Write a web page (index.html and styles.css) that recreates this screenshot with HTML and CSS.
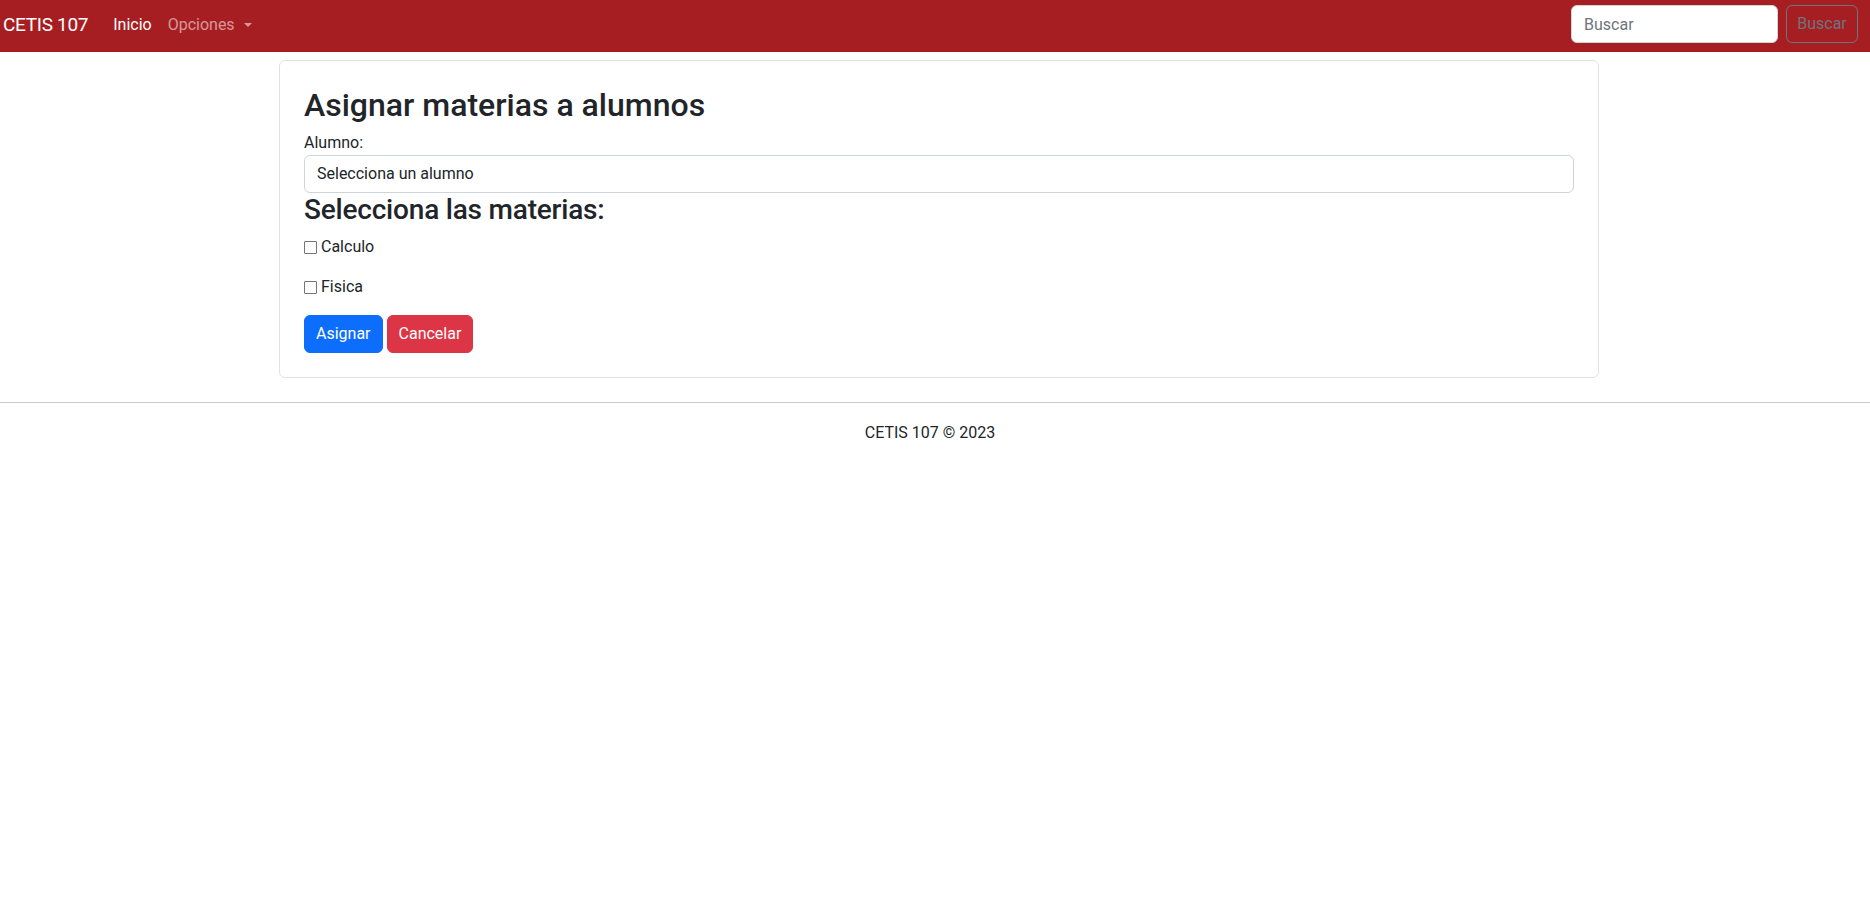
FILE: index.html
```html
<!DOCTYPE html>
<html lang="es">
<head>
<meta charset="utf-8">
<title>Asignar materias</title>
<link rel="stylesheet" href="styles.css">
</head>
<body>
<nav class="navbar">
  <div class="nav-left">
    <a class="brand" href="#">CETIS 107</a>
    <a class="nav-link active" href="#">Inicio</a>
    <a class="nav-link dropdown" href="#">Opciones <span class="caret"></span></a>
  </div>
  <form class="search">
    <input class="search-input" type="text" placeholder="Buscar">
    <button class="search-btn" type="button">Buscar</button>
  </form>
</nav>
<main class="main">
  <section class="card">
    <h2 class="title">Asignar materias a alumnos</h2>
    <label class="label">Alumno:</label>
    <div class="select">Selecciona un alumno</div>
    <h3 class="subtitle">Selecciona las materias:</h3>
    <p class="check"><span class="box"></span>Calculo</p>
    <p class="check"><span class="box"></span>Fisica</p>
    <div class="actions">
      <button class="btn btn-primary" type="button">Asignar</button>
      <button class="btn btn-danger" type="button">Cancelar</button>
    </div>
  </section>
</main>
<footer class="footer">
  <hr class="rule">
  <p class="copy">CETIS 107 © 2023</p>
</footer>
</body>
</html>
```

FILE: styles.css
```css
* { box-sizing: border-box; }
html, body { margin: 0; padding: 0; }
body {
  font-family: Roboto, "Liberation Sans", sans-serif;
  font-size: 16px;
  line-height: 1.5;
  color: #212529;
  background: #fff;
}
.navbar {
  height: 52px;
  background: #a71e22;
  display: flex;
  align-items: center;
  justify-content: space-between;
  padding: 5px 12px 9px 3px;
}
.nav-left { display: flex; align-items: center; padding-top: 1px; }
.brand {
  font-size: 19px;
  letter-spacing: -0.3px;
  color: #fff;
  text-decoration: none;
  margin-right: 25px;
  line-height: 30px;
}
.nav-link {
  color: rgba(255,255,255,0.55);
  text-decoration: none;
  padding: 0;
  margin-right: 16px;
}
.nav-link.active { color: #fff; }
.caret {
  display: inline-block;
  width: 0; height: 0;
  border-left: 4px solid transparent;
  border-right: 4px solid transparent;
  border-top: 4px solid rgba(255,255,255,0.55);
  vertical-align: 3px;
  margin-left: 5px;
}
.search { display: flex; align-items: center; gap: 8px; }
.search-input {
  width: 207px; height: 38px;
  border: 1px solid #ced4da;
  border-radius: 6px;
  padding: 6px 12px;
  font: inherit;
  color: #212529;
  background: #fff;
}
.search-input::placeholder { color: #6c757d; }
.search-btn {
  width: 72px; height: 38px;
  border: 1px solid #6c757d;
  border-radius: 6px;
  background: transparent;
  color: #6c757d;
  font: inherit;
  padding: 0;
}
.main {
  display: flex;
  justify-content: center;
  padding: 8px 0 0 8px;
}
.card {
  width: 1320px;
  border: 1px solid #dee2e6;
  border-radius: 6px;
  padding: 24px;
}
.title {
  font-size: 32px;
  font-weight: 500;
  line-height: 1.2;
  margin: 1px 0 7px;
}
.label { display: block; }
.select {
  height: 38px;
  border: 1px solid #ced4da;
  border-radius: 6px;
  padding: 6px 12px;
  line-height: 24px;
}
.subtitle {
  font-size: 28px;
  font-weight: 500;
  line-height: 1.2;
  margin: 0 0 8px;
  letter-spacing: -0.2px;
}
.check {
  margin: 0 0 16px;
  display: flex;
  align-items: center;
}
.box {
  width: 13px; height: 13px;
  border: 1px solid #767676;
  border-radius: 1px;
  margin: 1px 4px 0 0;
  background: #fff;
}
.actions { display: flex; gap: 4px; }
.btn {
  height: 38px;
  border: 1px solid transparent;
  border-radius: 6px;
  color: #fff;
  font: inherit;
  padding: 6px 11px;
}
.btn-primary { background: #0d6efd; border-color: #0d6efd; }
.btn-danger { background: #dc3545; border-color: #dc3545; }
.footer { margin-top: 24px; }
.rule {
  margin: 0;
  border: 0;
  border-top: 1px solid #ccc;
}
.copy {
  text-align: center;
  margin: 18px 0 0;
  padding-right: 10px;
}
```
